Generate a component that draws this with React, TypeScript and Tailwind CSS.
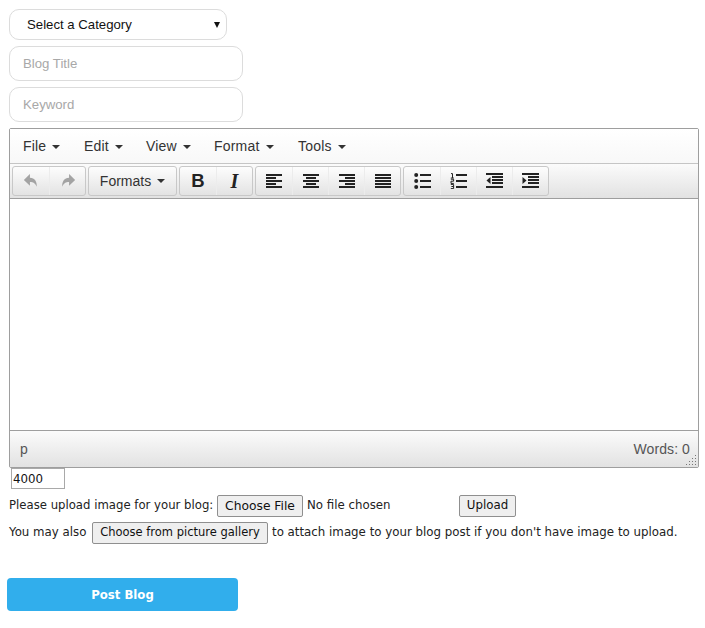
import type { ReactNode } from 'react';

const menus = [
  { label: 'File', w: 'w-[61px]' },
  { label: 'Edit', w: 'w-[62px]' },
  { label: 'View', w: 'w-[68px]' },
  { label: 'Format', w: 'w-[84px]' },
  { label: 'Tools', w: 'w-[60px]' },
];

function Caret() {
  return <span className="inline-block w-0 h-0 border-x-[4px] border-x-transparent border-t-[4px] border-t-[#333]" />;
}

function Lines({ rows }: { rows: [number, number][] }) {
  return (
    <svg width="16" height="14" viewBox="0 0 16 14" fill="#222">
      {rows.map(([x, w], i) => (
        <rect key={i} x={x} y={i * 3} width={w} height="2" />
      ))}
    </svg>
  );
}

function ListBullet() {
  return (
    <svg width="17" height="16" viewBox="0 0 17 16" fill="#222">
      <circle cx="2.2" cy="2" r="2" />
      <circle cx="2.2" cy="8" r="2" />
      <circle cx="2.2" cy="14" r="2" />
      <rect x="6" y="1" width="11" height="2" />
      <rect x="6" y="7" width="11" height="2" />
      <rect x="6" y="13" width="11" height="2" />
    </svg>
  );
}

function ListNumber() {
  return (
    <svg width="17" height="16" viewBox="0 0 17 16" fill="none" stroke="#222">
      <path d="M1 0.6h1.5v4.4M0.8 5h3" strokeWidth="1" />
      <path d="M0.8 6.2h2.8v2H1v2.2h2.8" strokeWidth="1" />
      <path d="M0.8 11.4h2.8v4.2H0.8M1.4 13.5h2.2" strokeWidth="1" />
      <path d="M6 2h11M6 8h11M6 14h11" strokeWidth="2" />
    </svg>
  );
}

function Indent({ out }: { out?: boolean }) {
  return (
    <svg width="17" height="16" viewBox="0 0 17 16" fill="#222">
      <rect x="0" y="0" width="17" height="2" />
      <rect x="6" y="3" width="11" height="2" />
      <rect x="6" y="6" width="11" height="2" />
      <rect x="6" y="9" width="11" height="2" />
      <rect x="0" y="13" width="17" height="2" />
      {out ? <path d="M4.5 4L0.5 7.5l4 3.5z" /> : <path d="M0.5 4l4 3.5-4 3.5z" />}
    </svg>
  );
}

function Undo({ flip }: { flip?: boolean }) {
  return (
    <svg width="16" height="16" viewBox="0 0 15 15" fill="#a3a3a3" className={flip ? '-scale-x-100' : ''}>
      <path d="M6.5 1L0.8 6.5 6.5 12V8.4c3 0 5 1 6.4 4.6.4-5.2-2-8.4-6.4-8.6z" />
    </svg>
  );
}

function Tool({ children, first }: { children: ReactNode; first?: boolean }) {
  return (
    <div className={`h-[28px] w-[36px] flex items-center justify-center ${first ? '' : 'border-l border-l-[#ececec]'}`}>
      {children}
    </div>
  );
}

function Group({ children }: { children: ReactNode }) {
  return (
    <div className="flex h-[30px] rounded-[3px] border border-[#c8c8c8] bg-gradient-to-b from-[#fdfdfd] to-[#e3e3e3]">
      {children}
    </div>
  );
}

const btn = 'h-[22px] border border-[#8f8f8f] rounded-[2px] bg-[#efefef] text-[#111] flex items-center justify-center shrink-0 whitespace-nowrap';

export default function App() {
  return (
    <div className="w-[705px] h-[628px] bg-white pt-[9px] pl-[9px] font-['DejaVu_Sans',sans-serif] text-[11.8px] text-[#222] overflow-hidden">
      <div className="flex flex-col gap-[6px] font-['Liberation_Sans',sans-serif] text-[13.2px]">
        <div className="w-[218px] h-[31px] rounded-[10px] border border-[#dcdcdc] flex items-center justify-between pl-[17px] pr-[6px] text-[#111]">
          <span>Select a Category</span>
          <span className="inline-block w-0 h-0 border-x-[3.5px] border-x-transparent border-t-[6px] border-t-[#111]" />
        </div>
        <input className="w-[234px] h-[35px] rounded-[10px] border border-[#dcdcdc] px-[13px] pb-[1px] outline-none font-bold placeholder:text-[#a8a8a8] placeholder:font-normal" placeholder="Blog Title" />
        <input className="w-[234px] h-[35px] rounded-[10px] border border-[#dcdcdc] px-[13px] pb-[1px] outline-none placeholder:text-[#a8a8a8]" placeholder="Keyword" />
      </div>

      <div className="mt-[6px] w-[690px] h-[340px] border border-[#9e9e9e] rounded-[2px] flex flex-col font-['Liberation_Sans',sans-serif] text-[14px] text-[#333]">
        <div className="h-[35px] border-b border-[#c5c5c5] bg-gradient-to-b from-white to-[#f8f8f8] flex items-center pl-[13px] pt-[1px]">
          {menus.map(m => (
            <span key={m.label} className={`flex items-center gap-[6px] tracking-[0.2px] ${m.w}`}>
              {m.label}
              <Caret />
            </span>
          ))}
        </div>
        <div className="h-[35px] border-b border-[#9e9e9e] bg-gradient-to-b from-[#fbfbfb] to-[#e2e2e2] flex items-start pt-[2px] pl-[2px] gap-[2px]">
          <Group>
            <Tool first><Undo /></Tool>
            <Tool><Undo flip /></Tool>
          </Group>
          <Group>
            <div className="w-[87px] flex items-center justify-center gap-[6px]">
              Formats
              <Caret />
            </div>
          </Group>
          <Group>
            <Tool first><span className="font-bold text-[18.5px] text-[#222]">B</span></Tool>
            <Tool><span className="italic font-bold text-[20px] font-['Liberation_Serif',serif] text-[#222]">I</span></Tool>
          </Group>
          <Group>
            <Tool first><Lines rows={[[0, 16], [0, 10], [0, 16], [0, 10], [0, 16]]} /></Tool>
            <Tool><Lines rows={[[0, 16], [3, 10], [0, 16], [3, 10], [0, 16]]} /></Tool>
            <Tool><Lines rows={[[0, 16], [6, 10], [0, 16], [6, 10], [0, 16]]} /></Tool>
            <Tool><Lines rows={[[0, 16], [0, 16], [0, 16], [0, 16], [0, 16]]} /></Tool>
          </Group>
          <Group>
            <Tool first><ListBullet /></Tool>
            <Tool><ListNumber /></Tool>
            <Tool><Indent out /></Tool>
            <Tool><Indent /></Tool>
          </Group>
        </div>
        <div className="flex-1 bg-white" />
        <div className="relative h-[37px] border-t border-[#9e9e9e] bg-gradient-to-b from-[#fbfbfb] to-[#e2e2e2] flex items-center justify-between pl-[10px] pr-[8px] text-[#555]">
          <span>p</span>
          <span className="tracking-[0.1px]">Words: 0</span>
          <svg width="11" height="11" viewBox="0 0 11 11" fill="#777" className="absolute right-[1px] bottom-[1px]">
            <rect x="9" y="0" width="1" height="1" />
            <rect x="9" y="3" width="1" height="1" /><rect x="6" y="3" width="1" height="1" />
            <rect x="9" y="6" width="1" height="1" /><rect x="6" y="6" width="1" height="1" /><rect x="3" y="6" width="1" height="1" />
            <rect x="9" y="9" width="1" height="1" /><rect x="6" y="9" width="1" height="1" /><rect x="3" y="9" width="1" height="1" /><rect x="0" y="9" width="1" height="1" />
          </svg>
        </div>
      </div>

      <input
        readOnly
        value="4000"
        className="block ml-[2px] w-[54px] h-[21px] border border-[#a9a9a9] px-[1px] outline-none text-[11.8px] text-[#111] font-['DejaVu_Sans',sans-serif]"
      />

      <div className="mt-[6px] h-[22px] flex items-center">
        <span className="text-[11.7px] w-[204px] whitespace-nowrap">Please upload image for your blog:</span>
        <div className={`${btn} ml-[4px] w-[86px] text-[12.3px]`}>Choose File</div>
        <span className="ml-[4px] w-[152px]">No file chosen</span>
        <div className={`${btn} w-[57px]`}>Upload</div>
      </div>
      <div className="mt-[5px] h-[22px] flex items-center whitespace-nowrap">
        <span className="w-[79px]">You may also</span>
        <div className={`${btn} ml-[4px] w-[176px] text-[11.5px]`}>Choose from picture gallery</div>
        <span className="ml-[4px] text-[11.82px]">to attach image to your blog post if you don't have image to upload.</span>
      </div>

      <button className="block mt-[34px] -ml-[2px] w-[231px] h-[33px] pt-[3px] rounded-[4px] bg-[#31aeec] text-white text-[11.7px] font-bold">
        Post Blog
      </button>
    </div>
  );
}
